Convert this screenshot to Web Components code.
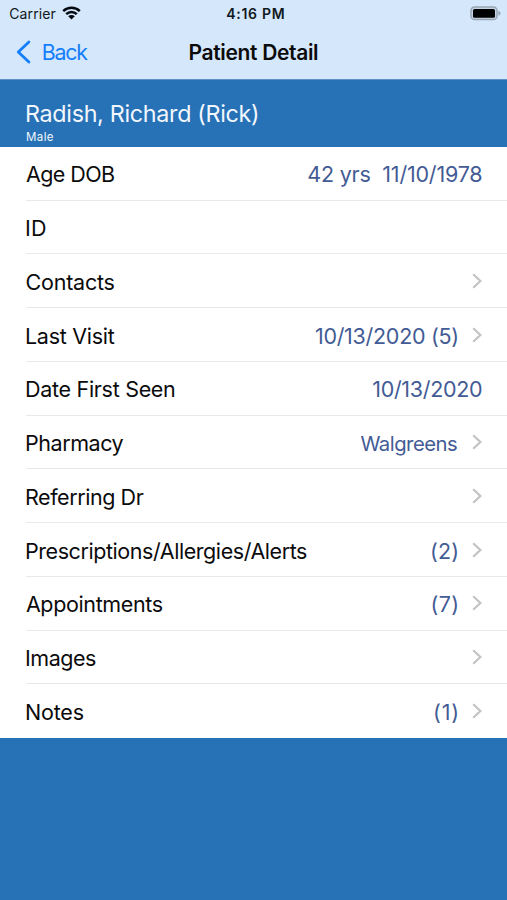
<!DOCTYPE html>
<html lang="en">
<head>
<meta charset="utf-8">
<title>Patient Detail</title>
<style>
html,body{margin:0;height:100%;background:#2771b6}
body{font-family:Inter,"Liberation Sans",sans-serif;color:#0b0b0c;overflow:hidden}
</style>
</head>
<body>
<patient-screen></patient-screen>
<script>
const FONT='Inter, "Liberation Sans", sans-serif';
const ctx=document.createElement('canvas').getContext('2d');

/* A single line of text, tracked so that its glyphs span the given width. */
class TrackedText extends HTMLElement{
  connectedCallback(){
    const text=this.getAttribute('text'),size=+this.getAttribute('size'),
      weight=this.getAttribute('weight')||400,span=+this.getAttribute('span');
    /* measured at ten times the size, to keep fractions of a pixel */
    ctx.font=`${weight} ${size*10}px ${FONT}`;
    const m=ctx.measureText(text);
    const left=m.actualBoundingBoxLeft/10,ink=m.actualBoundingBoxRight/10+left;
    const edge=text[0]==='A'?.4:.8;
    const track=text.length>1?(span-1.4-ink)/(text.length-1):0;
    this.attachShadow({mode:'open'}).innerHTML=`<style>
      :host{display:block;flex:none;width:${span}px;white-space:pre;font:${weight} ${size}px/1.2 ${FONT};
        letter-spacing:${track.toFixed(4)}px}
      span{display:inline-block;margin-left:${(left+edge).toFixed(3)}px}
    </style><span></span>`;
    this.shadowRoot.querySelector('span').textContent=text;
  }
}
customElements.define('tracked-text',TrackedText);

class StatusBar extends HTMLElement{
  connectedCallback(){
    this.attachShadow({mode:'open'}).innerHTML=`<style>
      :host{display:grid;grid-template-columns:1fr auto 1fr;align-items:center;height:28px;box-sizing:border-box;padding:0 6px 0 9.3px;color:#101820}
      .left{display:flex;align-items:center;gap:6.4px}
      .right{display:flex;justify-content:flex-end}
      svg{display:block}.left svg{margin-top:-2px}.right svg{margin-top:-2px}
    </style>
    <div class="left"><tracked-text text="Carrier" size="14" span="46.8"></tracked-text>
      <svg width="19" height="14" viewBox="0 0 19 14">
        <g fill="none" stroke="#050a10" stroke-width="2.5"><path d="M1.2 5.1a11.8 11.8 0 0 1 16.6 0"/><path d="M4.2 8.2a7.5 7.5 0 0 1 10.6 0"/></g>
        <path fill="#050a10" d="M6.2 10.3a4.7 4.7 0 0 1 6.6 0L9.5 13.6z"/>
      </svg></div>
    <tracked-text text="4:16 PM" size="14" weight="600" span="58"></tracked-text>
    <div class="right"><svg width="31" height="15" viewBox="0 0 31 15">
      <rect x="1" y="1" width="26" height="12.6" rx="3.6" fill="#c5d5e6" stroke="#98a6b5" stroke-width="1.5"/>
      <rect x="3" y="3" width="22" height="8.8" rx="1.5" fill="#000"/>
      <path d="M28.4 4.8c2.8 1 2.8 4 0 5z" fill="#98a6b5"/></svg></div>`;
  }
}
customElements.define('status-bar',StatusBar);

class NavBar extends HTMLElement{
  connectedCallback(){
    this.attachShadow({mode:'open'}).innerHTML=`<style>
      :host{display:grid;grid-template-columns:1fr auto 1fr;align-items:center;height:52px;box-sizing:border-box;padding:0 16px 1px;border-bottom:1px solid #5b91c8}
      .back{display:flex;align-items:center;gap:11.8px;color:#147efb}
      svg{display:block;margin-top:-1px}
    </style>
    <div class="back"><svg width="15" height="24" viewBox="0 0 15 24"><path d="M12.9 2L2.3 12 12.9 22" fill="none" stroke="#147efb" stroke-width="2.8" stroke-linecap="round" stroke-linejoin="round"/></svg>
    <tracked-text text="Back" size="21.3" span="45.4"></tracked-text></div>
    <tracked-text text="Patient Detail" size="21" weight="600" span="128.6"></tracked-text><i></i>`;
  }
}
customElements.define('nav-bar',NavBar);

class PatientHeader extends HTMLElement{
  connectedCallback(){
    this.attachShadow({mode:'open'}).innerHTML=`<style>
      :host{display:flex;flex-direction:column;gap:3px;height:67px;box-sizing:border-box;padding:20px 26.2px 0;color:#f1f7fd}
    </style>
    <tracked-text text="Radish, Richard (Rick)" size="23.3" span="231.6"></tracked-text>
    <tracked-text text="Male" size="11.5" span="27.4"></tracked-text>`;
  }
}
customElements.define('patient-header',PatientHeader);

class DetailRow extends HTMLElement{
  connectedCallback(){
    const chev=this.hasAttribute('link');
    this.attachShadow({mode:'open'}).innerHTML=`<style>
      :host{display:block;flex:1;min-height:0;padding-left:26px;background:#fff}
      div{height:100%;box-sizing:border-box;display:flex;align-items:center;justify-content:space-between;padding-right:25px;border-bottom:1px solid #e9e9eb}
      :host(:last-child) div{border-color:transparent}
      section{display:flex;align-items:center;gap:14.5px;color:#435b94}
      svg{display:block}
    </style><div><slot name="label"></slot><section><slot></slot>${chev?'<svg width="10" height="16" viewBox="0 0 10 16"><path d="M1.2 1.2L8.4 8 1.2 14.8" fill="none" stroke="#c3c3c6" stroke-width="2.2"/></svg>':''}</section></div>`;
  }
}
customElements.define('detail-row',DetailRow);

class PatientScreen extends HTMLElement{
  connectedCallback(){
    const rows=[
      ['Age DOB',89,'42 yrs  11/10/1978',174.4,0],
      ['ID',20,'',0,0],
      ['Contacts',88.4,'',0,1],
      ['Last Visit',89,'10/13/2020 (5)',142.4,1],
      ['Date First Seen',148.8,'10/13/2020',109.6,0],
      ['Pharmacy',97.8,'Walgreens',97.4,1],
      ['Referring Dr',118,'',0,1],
      ['Prescriptions/Allergies/Alerts',281,'(2)',26,1],
      ['Appointments',137,'(7)',25.5,1],
      ['Images',70,'',0,1],
      ['Notes',57.6,'(1)',23,1]];
    const t=(text,span,slot)=>`<tracked-text ${slot} text="${text}" size="${text==='Walgreens'?20.3:21.5}" span="${span}"></tracked-text>`;
    this.attachShadow({mode:'open'}).innerHTML=`<style>
      :host{display:block;height:900px;background:#2771b6}
      header{background:#d4e7fb}
      main{display:flex;flex-direction:column;height:591px}
      main tracked-text{padding:4px 0 0}
    </style><header><status-bar></status-bar><nav-bar></nav-bar></header>
    <patient-header></patient-header>
    <main>${rows.map(r=>`<detail-row ${r[4]?'link':''}>${t(r[0],r[1],'slot="label"')}${r[2]?t(r[2],r[3],''):''}</detail-row>`).join('')}</main>`;
  }
}
customElements.define('patient-screen',PatientScreen);
</script>
</body>
</html>
